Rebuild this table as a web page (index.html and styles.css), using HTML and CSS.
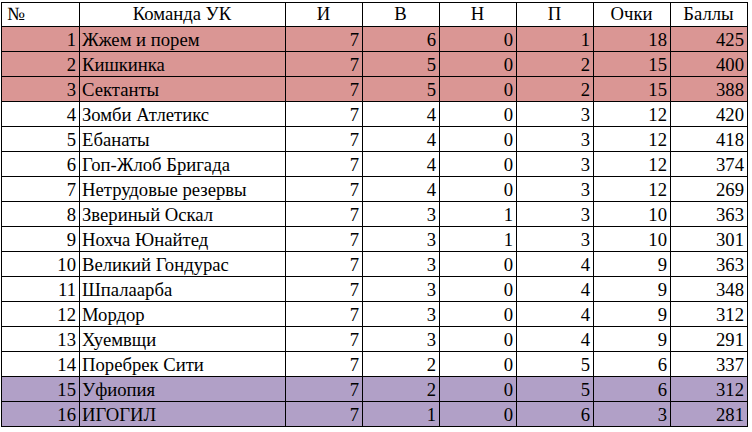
FILE: index.html
```html
<!DOCTYPE html>
<html lang="ru">
<head>
<meta charset="utf-8">
<title>Таблица УК</title>
<link rel="stylesheet" href="styles.css">
</head>
<body>
<div class="sheet">
  <div class="row head"><div class="c l">№</div><div class="c">Команда УК</div><div class="c">И</div><div class="c">В</div><div class="c">Н</div><div class="c">П</div><div class="c">Очки</div><div class="c">Баллы</div></div>
  <div class="row pink"><div class="c r">1</div><div class="c l">Жжем и порем</div><div class="c r">7</div><div class="c r">6</div><div class="c r">0</div><div class="c r">1</div><div class="c r">18</div><div class="c r">425</div></div>
  <div class="row pink"><div class="c r">2</div><div class="c l">Кишкинка</div><div class="c r">7</div><div class="c r">5</div><div class="c r">0</div><div class="c r">2</div><div class="c r">15</div><div class="c r">400</div></div>
  <div class="row pink"><div class="c r">3</div><div class="c l">Сектанты</div><div class="c r">7</div><div class="c r">5</div><div class="c r">0</div><div class="c r">2</div><div class="c r">15</div><div class="c r">388</div></div>
  <div class="row"><div class="c r">4</div><div class="c l">Зомби Атлетикс</div><div class="c r">7</div><div class="c r">4</div><div class="c r">0</div><div class="c r">3</div><div class="c r">12</div><div class="c r">420</div></div>
  <div class="row"><div class="c r">5</div><div class="c l">Ебанаты</div><div class="c r">7</div><div class="c r">4</div><div class="c r">0</div><div class="c r">3</div><div class="c r">12</div><div class="c r">418</div></div>
  <div class="row"><div class="c r">6</div><div class="c l">Гоп-Жлоб Бригада</div><div class="c r">7</div><div class="c r">4</div><div class="c r">0</div><div class="c r">3</div><div class="c r">12</div><div class="c r">374</div></div>
  <div class="row"><div class="c r">7</div><div class="c l">Нетрудовые резервы</div><div class="c r">7</div><div class="c r">4</div><div class="c r">0</div><div class="c r">3</div><div class="c r">12</div><div class="c r">269</div></div>
  <div class="row"><div class="c r">8</div><div class="c l">Звериный Оскал</div><div class="c r">7</div><div class="c r">3</div><div class="c r">1</div><div class="c r">3</div><div class="c r">10</div><div class="c r">363</div></div>
  <div class="row"><div class="c r">9</div><div class="c l">Нохча Юнайтед</div><div class="c r">7</div><div class="c r">3</div><div class="c r">1</div><div class="c r">3</div><div class="c r">10</div><div class="c r">301</div></div>
  <div class="row"><div class="c r">10</div><div class="c l">Великий Гондурас</div><div class="c r">7</div><div class="c r">3</div><div class="c r">0</div><div class="c r">4</div><div class="c r">9</div><div class="c r">363</div></div>
  <div class="row"><div class="c r">11</div><div class="c l">Шпалаарба</div><div class="c r">7</div><div class="c r">3</div><div class="c r">0</div><div class="c r">4</div><div class="c r">9</div><div class="c r">348</div></div>
  <div class="row"><div class="c r">12</div><div class="c l">Мордор</div><div class="c r">7</div><div class="c r">3</div><div class="c r">0</div><div class="c r">4</div><div class="c r">9</div><div class="c r">312</div></div>
  <div class="row"><div class="c r">13</div><div class="c l">Хуемвщи</div><div class="c r">7</div><div class="c r">3</div><div class="c r">0</div><div class="c r">4</div><div class="c r">9</div><div class="c r">291</div></div>
  <div class="row"><div class="c r">14</div><div class="c l">Поребрек Сити</div><div class="c r">7</div><div class="c r">2</div><div class="c r">0</div><div class="c r">5</div><div class="c r">6</div><div class="c r">337</div></div>
  <div class="row purple"><div class="c r">15</div><div class="c l">Уфиопия</div><div class="c r">7</div><div class="c r">2</div><div class="c r">0</div><div class="c r">5</div><div class="c r">6</div><div class="c r">312</div></div>
  <div class="row purple"><div class="c r">16</div><div class="c l">ИГОГИЛ</div><div class="c r">7</div><div class="c r">1</div><div class="c r">0</div><div class="c r">6</div><div class="c r">3</div><div class="c r">281</div></div>
</div>
</body>
</html>
```

FILE: styles.css
```css
html, body {
  margin: 0;
  padding: 0;
  background: #ffffff;
}

body {
  font-family: "Liberation Serif", "Times New Roman", serif;
  font-size: 18.67px;
  color: #000000;
}

.sheet {
  display: grid;
  grid-template-columns: 77px 205px 76px 76px 76px 76px 76px 76px;
  grid-template-rows: 23px repeat(16, 24px);
  gap: 1px;
  padding: 1px;
  background: #000000;
  width: max-content;
  margin: 2px 0 0 1px;
}

.row {
  display: contents;
}

.c {
  background: #ffffff;
  display: flex;
  align-items: flex-end;
  justify-content: center;
  line-height: 21px;
  padding: 0 3px 1px 2px;
  white-space: nowrap;
  overflow: hidden;
}

.head .c {
  padding-bottom: 2px;
}

.head .c.l {
  padding-left: 5px;
}

.c.l {
  justify-content: flex-start;
}

.c.r {
  justify-content: flex-end;
}

.pink .c {
  background: #da9694;
}

.purple .c {
  background: #b1a0c7;
}
```
